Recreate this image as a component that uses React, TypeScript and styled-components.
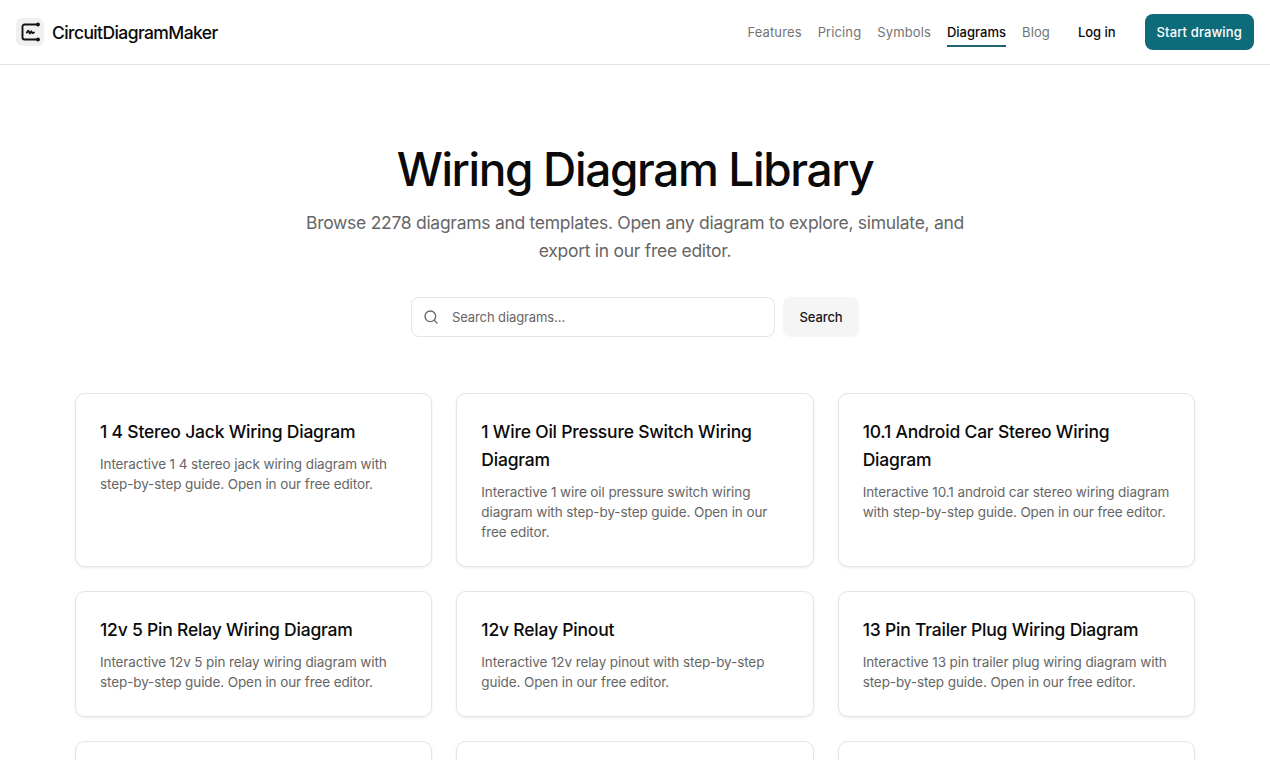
import React from "react";
import styled, { createGlobalStyle } from "styled-components";

const Global = createGlobalStyle`
  html, body { margin: 0; padding: 0; background: #fff; }
  body { font-family: Inter, "Liberation Sans", sans-serif; color: #0a0a0a; height: 760px; overflow: hidden; }
  * { box-sizing: border-box; }
`;

const Header = styled.header`
  height: 65px;
  border-bottom: 1px solid #e5e5e5;
  display: flex;
  align-items: center;
  justify-content: space-between;
  padding: 0 16px;
`;
const Brand = styled.a`
  display: flex;
  align-items: center;
  gap: 8px;
  font-size: 17.5px;
  font-weight: 500;
  letter-spacing: -0.6px;
`;
const LogoBox = styled.span`
  width: 28px;
  height: 28px;
  border-radius: 6px;
  background: #f0f0f0;
  display: flex;
  align-items: center;
  justify-content: center;
`;
const Nav = styled.nav`
  display: flex;
  align-items: center;
`;
const NavLink = styled.a<{ $active?: boolean }>`
  height: 30px;
  display: flex;
  align-items: center;
  margin-right: 16px;
  font-size: 13px;
  letter-spacing: ${(p) => (p.$active ? "0.02px" : "0.12px")};
  font-weight: ${(p) => (p.$active ? 500 : 400)};
  color: ${(p) => (p.$active ? "#0a0a0a" : "#737373")};
  box-shadow: ${(p) => (p.$active ? "inset 0 -2px 0 #1f6272" : "none")};
`;
const Login = styled.a`
  margin-left: 12px;
  margin-right: 29px;
  font-size: 13px;
  font-weight: 500;
  letter-spacing: -0.05px;
`;
const Cta = styled.a`
  width: 109.5px;
  height: 36px;
  border-radius: 8px;
  background: #0e6b7a;
  color: #fff;
  font-size: 13px;
  font-weight: 500;
  letter-spacing: 0.12px;
  display: flex;
  align-items: center;
  justify-content: center;
`;
const Hero = styled.section`
  display: flex;
  flex-direction: column;
  align-items: center;
  padding-top: 76px;
`;
const Title = styled.h1`
  margin: 0;
  font-size: 46px;
  line-height: 56px;
  font-weight: 500;
  letter-spacing: -1.38px;
`;
const Lead = styled.p`
  margin: 12px 0 0;
  width: 672px;
  text-align: center;
  font-size: 17.5px;
  line-height: 28px;
  letter-spacing: -0.28px;
  color: #666;
`;
const SearchRow = styled.form`
  display: flex;
  gap: 8px;
  margin-top: 32px;
`;
const SearchBox = styled.div`
  width: 364px;
  height: 40px;
  border: 1px solid #e5e5e5;
  border-radius: 8px;
  display: flex;
  align-items: center;
  padding-left: 11px;
  gap: 13px;
  color: #666;
  font-size: 13px;
  letter-spacing: -0.1px;
`;
const SearchBtn = styled.button`
  width: 76px;
  height: 40px;
  border: 0;
  border-radius: 8px;
  background: #f5f5f5;
  font: 500 13px Inter, sans-serif;
  letter-spacing: -0.08px;
  color: #171717;
`;
const Grid = styled.div`
  display: grid;
  grid-template-columns: repeat(3, 1fr);
  gap: 24px;
  padding: 0 75px;
  margin-top: 56px;
`;
const Card = styled.article`
  border: 1px solid #e5e5e5;
  border-radius: 10px;
  padding: 24px;
  box-shadow: 0 1px 3px rgba(0, 0, 0, 0.08);
  background: #fff;
`;
const CardTitle = styled.h3`
  margin: 0;
  font-size: 17.5px;
  line-height: 28px;
  font-weight: 500;
  letter-spacing: -0.2px;
`;
const CardText = styled.p`
  margin: 8px 0 0;
  font-size: 13.5px;
  line-height: 20px;
  letter-spacing: -0.1px;
  color: #666;
`;

const cards = [
  ["1 4 Stereo Jack Wiring Diagram", "Interactive 1 4 stereo jack wiring diagram with step-by-step guide. Open in our free editor."],
  ["1 Wire Oil Pressure Switch Wiring Diagram", "Interactive 1 wire oil pressure switch wiring diagram with step-by-step guide. Open in our free editor."],
  ["10.1 Android Car Stereo Wiring Diagram", "Interactive 10.1 android car stereo wiring diagram with step-by-step guide. Open in our free editor."],
  ["12v 5 Pin Relay Wiring Diagram", "Interactive 12v 5 pin relay wiring diagram with step-by-step guide. Open in our free editor."],
  ["12v Relay Pinout", "Interactive 12v relay pinout with step-by-step guide. Open in our free editor."],
  ["13 Pin Trailer Plug Wiring Diagram", "Interactive 13 pin trailer plug wiring diagram with step-by-step guide. Open in our free editor."],
];

const Logo = () => (
  <svg width="20" height="20" viewBox="0 0 20 20" fill="none" stroke="#111" strokeWidth="1.9" strokeLinecap="round" strokeLinejoin="round">
    <path d="M16.5 2.5H4.5a2 2 0 0 0-2 2v11a2 2 0 0 0 2 2h12" />
    <path d="M6.8 10.6 8.4 8.6l1.5 3 1.4-2.4 1.2 2 1.6-.8" strokeWidth="1.7" />
    <circle cx="18" cy="2.5" r="1" fill="#111" />
    <circle cx="18" cy="17.5" r="1" fill="#111" />
  </svg>
);

const SearchIcon = () => (
  <svg width="16" height="16" viewBox="0 0 24 24" fill="none" stroke="#666" strokeWidth="2" strokeLinecap="round" strokeLinejoin="round">
    <circle cx="11" cy="11" r="8" />
    <path d="m21 21-4.3-4.3" />
  </svg>
);

export default function App() {
  return (
    <>
      <Global />
      <Header>
        <Brand><LogoBox><Logo /></LogoBox>CircuitDiagramMaker</Brand>
        <Nav>
          <NavLink>Features</NavLink>
          <NavLink>Pricing</NavLink>
          <NavLink>Symbols</NavLink>
          <NavLink $active>Diagrams</NavLink>
          <NavLink>Blog</NavLink>
          <Login>Log in</Login>
          <Cta>Start drawing</Cta>
        </Nav>
      </Header>
      <Hero>
        <Title>Wiring Diagram Library</Title>
        <Lead>Browse 2278 diagrams and templates. Open any diagram to explore, simulate, and export in our free editor.</Lead>
        <SearchRow>
          <SearchBox><SearchIcon />Search diagrams...</SearchBox>
          <SearchBtn type="button">Search</SearchBtn>
        </SearchRow>
      </Hero>
      <Grid>
        {cards.map(([t, d]) => (
          <Card key={t}>
            <CardTitle>{t}</CardTitle>
            <CardText>{d}</CardText>
          </Card>
        ))}
        <Card />
        <Card />
        <Card />
      </Grid>
    </>
  );
}
